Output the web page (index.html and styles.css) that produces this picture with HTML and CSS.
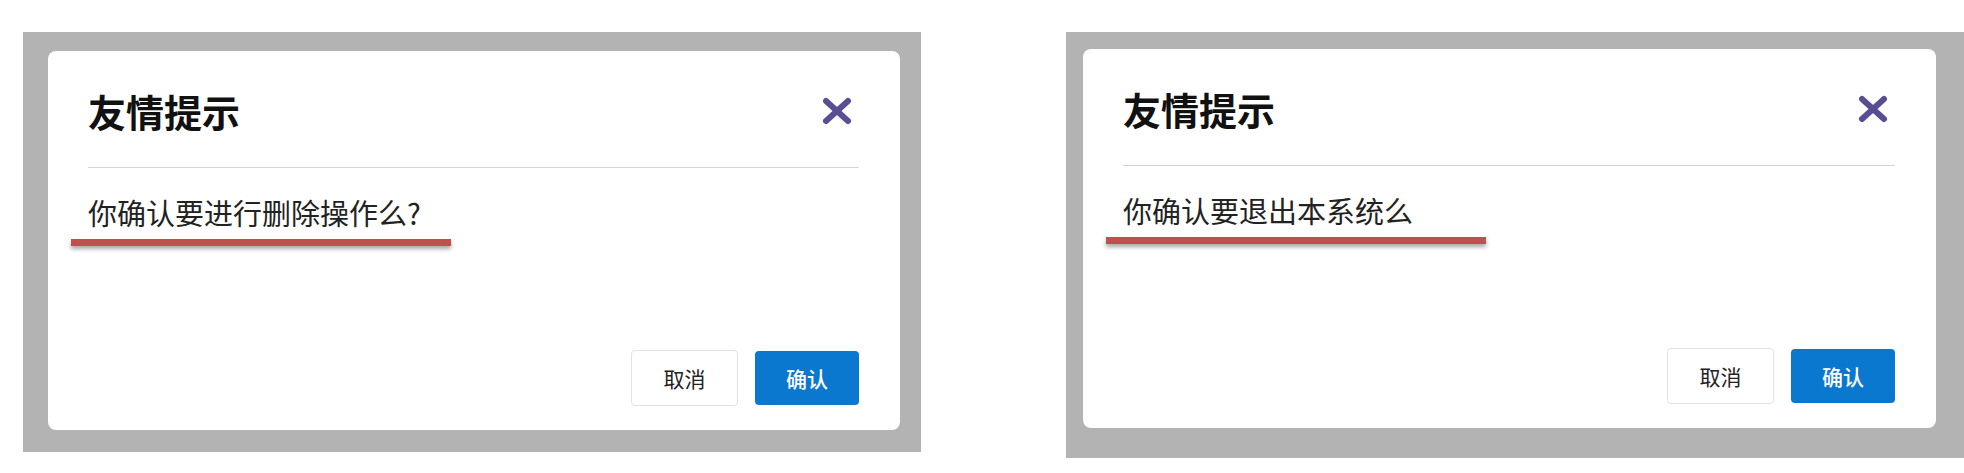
FILE: index.html
```html
<!DOCTYPE html>
<html>
<head>
	<meta charset="utf-8">
	<title>友情提示</title>
	<link rel="stylesheet" href="styles.css">
</head>
<body>

	<div class="screen">
		<div class="frame frame-delete">
			<div class="dialog">
				<div class="dialog-header">
					<div class="dialog-title">友情提示</div>
					<svg class="dialog-close" width="30" height="28" viewBox="0 0 30 28">
						<line x1="4" y1="4" x2="26" y2="24" />
						<line x1="26" y1="4" x2="4" y2="24" />
					</svg>
				</div>
				<div class="dialog-body">
					<div class="dialog-text">你确认要进行删除操作么?</div>
					<div class="mark-line"></div>
				</div>
				<div class="dialog-footer">
					<button class="btn btn-cancel">取消</button>
					<button class="btn btn-ok">确认</button>
				</div>
			</div>
		</div>

		<div class="frame frame-logout">
			<div class="dialog">
				<div class="dialog-header">
					<div class="dialog-title">友情提示</div>
					<svg class="dialog-close" width="30" height="28" viewBox="0 0 30 28">
						<line x1="4" y1="4" x2="26" y2="24" />
						<line x1="26" y1="4" x2="4" y2="24" />
					</svg>
				</div>
				<div class="dialog-body">
					<div class="dialog-text">你确认要退出本系统么</div>
					<div class="mark-line"></div>
				</div>
				<div class="dialog-footer">
					<button class="btn btn-cancel">取消</button>
					<button class="btn btn-ok">确认</button>
				</div>
			</div>
		</div>
	</div>

</body>
</html>
```

FILE: styles.css
```css
* {
	box-sizing: border-box;
}
body {
	margin: 0;
	background: #fff;
	font-family: "Noto Sans CJK SC", "Noto Sans", sans-serif;
}
.screen {
	display: flex;
	align-items: flex-start;
	gap: 145px;
	padding: 32px 0 0 23px;
}
.frame {
	display: flex;
	width: 898px;
	background: #b3b3b3;
}
.frame-delete {
	height: 420px;
	padding: 19px 21px 22px 25px;
}
.frame-logout {
	height: 426px;
	padding: 17px 28px 30px 17px;
}
.dialog {
	flex: 1;
	display: flex;
	flex-direction: column;
	background: #fff;
	border-radius: 8px;
	padding: 0 41px 24px 40px;
}
.dialog-header {
	display: flex;
	align-items: center;
	justify-content: space-between;
	padding: 41px 7px 37px 0;
	border-bottom: solid 1px #d4d4d4;
}
.dialog-title {
	font-size: 38px;
	line-height: 38px;
	font-weight: 700;
	color: #111;
}
.dialog-close {
	stroke: #594d94;
	stroke-width: 6;
	stroke-linecap: round;
}
.dialog-body {
	padding-top: 30px;
}
.dialog-text {
	font-size: 29px;
	line-height: 29px;
	color: #222;
}
.mark-line {
	width: 380px;
	height: 7px;
	margin: 12px 0 0 -17px;
	background: #c0504d;
	box-shadow: 0 3px 4px rgba(0, 0, 0, 0.35);
}
.dialog-footer {
	margin-top: auto;
	display: flex;
	align-items: center;
	justify-content: flex-end;
	gap: 17px;
}
.btn {
	font-family: inherit;
	font-size: 21px;
	border-radius: 4px;
	padding: 0;
	cursor: pointer;
}
.btn-cancel {
	width: 107px;
	height: 56px;
	background: #fff;
	color: #222;
	border: solid 1px #e2e2e2;
}
.btn-ok {
	width: 104px;
	height: 54px;
	background: #0b78cf;
	color: #fff;
	border: none;
	font-weight: 500;
}
```
